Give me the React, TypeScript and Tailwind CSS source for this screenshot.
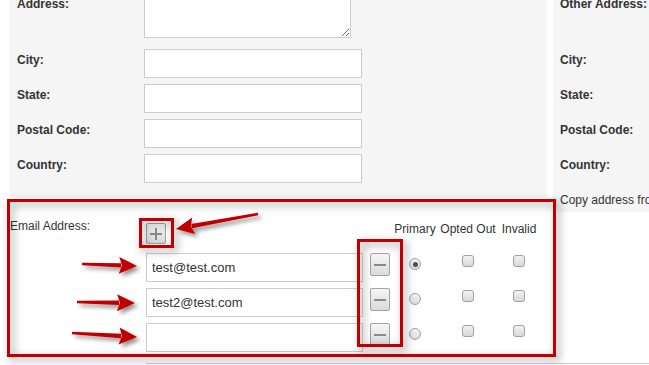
import React from 'react';

type Pt = [number, number];

const RED = '#c00000';

// Red annotation arrow drawn from tail to tip
function Arrow({ from, to }: { from: Pt; to: Pt }) {
  const dx = to[0] - from[0];
  const dy = to[1] - from[1];
  const len = Math.hypot(dx, dy);
  const ux = dx / len;
  const uy = dy / len;
  const nx = -uy;
  const ny = ux;
  const headLen = 18;
  const headHalf = 8.5;
  const bx = to[0] - ux * headLen;
  const by = to[1] - uy * headLen;
  const p = (x: number, y: number) => `${x.toFixed(1)},${y.toFixed(1)}`;
  const shaft = [
    p(from[0] + nx * 1.3, from[1] + ny * 1.3),
    p(bx + ux * 2 + nx * 2.2, by + uy * 2 + ny * 2.2),
    p(bx + ux * 2 - nx * 2.2, by + uy * 2 - ny * 2.2),
    p(from[0] - nx * 1.3, from[1] - ny * 1.3),
  ].join(' ');
  const head = [
    p(to[0], to[1]),
    p(bx + nx * headHalf, by + ny * headHalf),
    p(bx + ux * 3, by + uy * 3),
    p(bx - nx * headHalf, by - ny * headHalf),
  ].join(' ');
  return (
    <g fill={RED} filter="url(#arrowShadow)">
      <polygon points={shaft} />
      <polygon points={head} />
    </g>
  );
}

function SquareButton({ kind }: { kind: 'plus' | 'minus' }) {
  return (
    <div className="w-[20px] h-full flex items-center justify-center rounded-[2px] border border-[#a3a3a3] bg-gradient-to-b from-[#f6f6f6] to-[#dadada]">
      <svg width="14" height="14" viewBox="0 0 14 14">
        <rect x="1" y="6" width="12" height="2" fill="#8a8a8a" />
        {kind === 'plus' && <rect x="6" y="1" width="2" height="12" fill="#8a8a8a" />}
      </svg>
    </div>
  );
}

function Radio({ checked }: { checked?: boolean }) {
  return (
    <div className="mx-auto mt-[5px] w-[12px] h-[12px] rounded-full border border-[#a0a0a0] bg-gradient-to-b from-[#f4f4f4] to-[#dcdcdc] flex items-center justify-center">
      {checked && <div className="w-[5px] h-[5px] rounded-full bg-[#505050]" />}
    </div>
  );
}

function Checkbox() {
  return (
    <div className="mx-auto mt-[2px] w-[12px] h-[12px] rounded-[3px] border border-[#a0a0a0] bg-gradient-to-b from-[#f2f2f2] to-[#d9d9d9]" />
  );
}

function FieldRow({ label, last }: { label: string; last?: boolean }) {
  return (
    <div className={`flex items-start shrink-0 ${last ? '' : 'mb-[6px]'}`}>
      <div className="w-[127px] shrink-0 pt-[4px] text-[12px] leading-[14px] font-bold text-[#333]">{label}</div>
      <input readOnly className="w-[218px] h-[29px] shrink-0 bg-white border border-[#cccccc] outline-none" />
    </div>
  );
}

function AddressPanel({ title, children }: { title: string; children?: React.ReactNode }) {
  return (
    <div className="flex flex-col">
      <div className="flex items-start -mt-[7px] mb-[11px] shrink-0">
        <div className="w-[127px] shrink-0 pt-[4px] text-[12px] leading-[14px] font-bold text-[#333]">{title}</div>
        <textarea readOnly className="w-[207px] h-[45px] shrink-0 bg-white border border-[#cccccc] outline-none" />
      </div>
      <FieldRow label="City:" />
      <FieldRow label="State:" />
      <FieldRow label="Postal Code:" />
      <FieldRow label="Country:" last />
      {children}
    </div>
  );
}

const emails = ['test@test.com', 'test2@test.com', ''];

export default function App() {
  return (
    <div className="relative w-[649px] h-[365px] overflow-hidden bg-white font-['Liberation_Sans',Arial,sans-serif] text-[#333]">
      <div className="flex items-start pl-[10px] gap-[6px]">
        {/* Left column: address + email */}
        <div className="w-[537px] shrink-0">
          <div className="bg-[#f5f5f5] px-[7px] pb-[14px]">
            <AddressPanel title="Address:" />
          </div>

          <div className="mt-[22px] grid grid-cols-[136px_224px_20px_50px_56px_46px] grid-rows-[28px_29px_29px_29px] gap-y-[6px]">
            <div className="text-[12px] leading-[14px]">Email Address:</div>
            <div className="pt-[4px] h-[25px]">
              <SquareButton kind="plus" />
            </div>
            <div />
            <div className="mt-[3px] text-center text-[12px] leading-[14px] whitespace-nowrap">Primary</div>
            <div className="mt-[3px] text-center text-[12px] leading-[14px] whitespace-nowrap">Opted Out</div>
            <div className="mt-[3px] text-center text-[12px] leading-[14px] whitespace-nowrap">Invalid</div>

            {emails.map((email, i) => (
              <React.Fragment key={i}>
                <div />
                <input
                  readOnly
                  value={email}
                  className="w-[217px] h-[29px] bg-white border border-[#cccccc] px-[5px] text-[13px] text-[#333] outline-none"
                />
                <div className="h-[23px]">
                  <SquareButton kind="minus" />
                </div>
                <div>
                  <Radio checked={i === 0} />
                </div>
                <div>
                  <Checkbox />
                </div>
                <div>
                  <Checkbox />
                </div>
              </React.Fragment>
            ))}
          </div>

          <div className="mt-[11px] ml-[136px] w-[503px] border-t border-[#cccccc]" />
        </div>

        {/* Right column: other address */}
        <div className="w-[400px] shrink-0 bg-[#f5f5f5] pl-[7px] pb-[5px]">
          <AddressPanel title="Other Address:">
            <div className="mt-[10px] text-[12px] leading-[14px] whitespace-nowrap">Copy address from left:</div>
          </AddressPanel>
        </div>
      </div>

      {/* Annotations */}
      <div className="absolute left-[7px] top-[199px] w-[549px] h-[158px] border-[3px] border-[#c00000] [filter:drop-shadow(3px_3px_4px_rgba(0,0,0,0.45))] pointer-events-none" />
      <div className="absolute left-[139px] top-[218px] w-[35px] h-[30px] border-[3px] border-[#c00000] [filter:drop-shadow(3px_3px_4px_rgba(0,0,0,0.45))] pointer-events-none" />
      <div className="absolute left-[357px] top-[239px] w-[46px] h-[108px] border-[3px] border-[#c00000] [filter:drop-shadow(3px_3px_4px_rgba(0,0,0,0.45))] pointer-events-none" />

      <svg className="absolute inset-0 pointer-events-none" width="649" height="365">
        <defs>
          <filter id="arrowShadow" x="-20%" y="-50%" width="150%" height="250%">
            <feDropShadow dx="3" dy="3" stdDeviation="2" floodColor="#000" floodOpacity="0.45" />
          </filter>
        </defs>
        <Arrow from={[258, 214]} to={[176, 229]} />
        <Arrow from={[82, 264]} to={[137, 266]} />
        <Arrow from={[77, 302]} to={[135, 303]} />
        <Arrow from={[72, 333]} to={[137, 337]} />
      </svg>
    </div>
  );
}
